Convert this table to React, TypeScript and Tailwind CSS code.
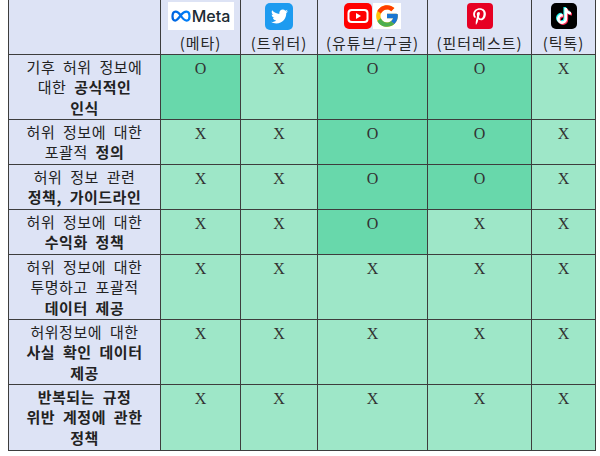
import React from "react";
import { FaTwitter, FaPinterestP, FaTiktok } from "react-icons/fa";
import { FcGoogle } from "react-icons/fc";

type Cell = { v: "O" | "X"; dark: boolean };

const rows: { lines: React.ReactNode[]; h: string; cells: Cell[] }[] = [
  {
    lines: [
      <>기후 허위 정보에</>,
      <>대한 <b className="font-bold">공식적인</b></>,
      <b className="font-bold">인식</b>,
    ],
    h: "h-[65px]",
    cells: [
      { v: "O", dark: true },
      { v: "X", dark: false },
      { v: "O", dark: true },
      { v: "O", dark: true },
      { v: "X", dark: false },
    ],
  },
  {
    lines: [<>허위 정보에 대한</>, <>포괄적 <b className="font-bold">정의</b></>],
    h: "h-[45px]",
    cells: [
      { v: "X", dark: false },
      { v: "X", dark: false },
      { v: "O", dark: true },
      { v: "O", dark: true },
      { v: "X", dark: false },
    ],
  },
  {
    lines: [<>허위 정보 관련</>, <b className="font-bold">정책, 가이드라인</b>],
    h: "h-[45px]",
    cells: [
      { v: "X", dark: false },
      { v: "X", dark: false },
      { v: "O", dark: true },
      { v: "O", dark: true },
      { v: "X", dark: false },
    ],
  },
  {
    lines: [<>허위 정보에 대한</>, <b className="font-bold">수익화 정책</b>],
    h: "h-[45px]",
    cells: [
      { v: "X", dark: false },
      { v: "X", dark: false },
      { v: "O", dark: true },
      { v: "X", dark: false },
      { v: "X", dark: false },
    ],
  },
  {
    lines: [
      <>허위 정보에 대한</>,
      <>투명하고 포괄적</>,
      <b className="font-bold">데이터 제공</b>,
    ],
    h: "h-[65px]",
    cells: [
      { v: "X", dark: false },
      { v: "X", dark: false },
      { v: "X", dark: false },
      { v: "X", dark: false },
      { v: "X", dark: false },
    ],
  },
  {
    lines: [
      <>허위정보에 대한</>,
      <b className="font-bold">사실 확인 데이터</b>,
      <b className="font-bold">제공</b>,
    ],
    h: "h-[65px]",
    cells: [
      { v: "X", dark: false },
      { v: "X", dark: false },
      { v: "X", dark: false },
      { v: "X", dark: false },
      { v: "X", dark: false },
    ],
  },
  {
    lines: [
      <b className="font-bold">반복되는 규정</b>,
      <b className="font-bold">위반 계정에 관한</b>,
      <b className="font-bold">정책</b>,
    ],
    h: "h-[66px]",
    cells: [
      { v: "X", dark: false },
      { v: "X", dark: false },
      { v: "X", dark: false },
      { v: "X", dark: false },
      { v: "X", dark: false },
    ],
  },
];

const kr = { fontFamily: '"Noto Sans CJK KR", "Noto Sans", sans-serif' };

function MetaLogo() {
  return (
    <div className="flex h-[28px] w-[66px] items-center justify-center gap-[1px] bg-white">
      <svg width="20" height="12" viewBox="0 0 40 24">
        <defs>
          <linearGradient id="mg" x1="0" y1="0" x2="1" y2="0">
            <stop offset="0" stopColor="#0064e0" />
            <stop offset="1" stopColor="#0082fb" />
          </linearGradient>
        </defs>
        <path
          d="M20 12 C16 5 12 3 9 3 C5 3 3 8 3 13 C3 18 5 21 8.5 21 C12 21 15 17 20 10 C25 3 28 3 31 3 C35 3 37 8 37 13 C37 18 35 21 31.5 21 C28 21 24 18 20 12 Z"
          fill="none"
          stroke="url(#mg)"
          strokeWidth="4.5"
          strokeLinejoin="round"
        />
      </svg>
      <span
        className="text-[16px] leading-none font-medium text-[#1c2b33]"
        style={{ fontFamily: '"Inter", "Roboto", sans-serif' }}
      >
        Meta
      </span>
    </div>
  );
}

function YouTubeIcon() {
  return (
    <svg width="28" height="26" viewBox="0 0 28 26">
      <rect x="0" y="0" width="28" height="26" rx="5" fill="#ff0000" />
      <rect x="3.5" y="6" width="21" height="14" rx="4" fill="#ffffff" />
      <rect x="5.5" y="8" width="17" height="10" rx="2.5" fill="#ff0000" />
      <path d="M12 10 L17 13 L12 16 Z" fill="#ffffff" />
    </svg>
  );
}

function Header({ icon, label }: { icon: React.ReactNode; label: string }) {
  return (
    <div className="flex h-full flex-col items-center pt-[2px]">
      <div className="flex h-[28px] items-center">{icon}</div>
      <div
        className="mt-[3px] text-[15px] leading-[20px] tracking-[1px] text-[#262626]"
        style={kr}
      >
        {label}
      </div>
    </div>
  );
}

export default function App() {
  const border = "border border-[#3d3d3d]";
  return (
    <div className="bg-white pl-[8px] w-[600px] h-[456px]">
      <table className="table-fixed border-collapse w-[587px]">
        <colgroup>
          <col className="w-[152px]" />
          <col className="w-[80px]" />
          <col className="w-[77px]" />
          <col className="w-[110px]" />
          <col className="w-[104px]" />
          <col className="w-[64px]" />
        </colgroup>
        <thead>
          <tr className="h-[54px]">
            <th className={`${border} border-t-0 bg-[#dde3f5] p-0`}></th>
            <th className={`${border} border-t-0 bg-[#dde3f5] p-0 align-top font-normal`}>
              <Header icon={<MetaLogo />} label="(메타)" />
            </th>
            <th className={`${border} border-t-0 bg-[#dde3f5] p-0 align-top font-normal`}>
              <Header
                icon={
                  <div className="flex h-[27px] w-[28px] items-center justify-center rounded-[5px] bg-[#1d9bf0]">
                    <FaTwitter className="text-white" size={17} />
                  </div>
                }
                label="(트위터)"
              />
            </th>
            <th className={`${border} border-t-0 bg-[#dde3f5] p-0 align-top font-normal`}>
              <Header
                icon={
                  <div className="flex items-center gap-[1px]">
                    <YouTubeIcon />
                    <div className="flex h-[26px] w-[28px] items-center justify-center bg-white">
                      <FcGoogle size={26} />
                    </div>
                  </div>
                }
                label="(유튜브/구글)"
              />
            </th>
            <th className={`${border} border-t-0 bg-[#dde3f5] p-0 align-top font-normal`}>
              <Header
                icon={
                  <div className="flex h-[26px] w-[26px] items-center justify-center rounded-[4px] bg-[#e60023]">
                    <FaPinterestP className="text-white" size={17} />
                  </div>
                }
                label="(핀터레스트)"
              />
            </th>
            <th className={`${border} border-t-0 bg-[#dde3f5] p-0 align-top font-normal`}>
              <Header
                icon={
                  <div className="relative flex h-[26px] w-[26px] items-center justify-center rounded-[5px] bg-black">
                    <FaTiktok className="absolute text-[#25f4ee] translate-x-[-1px] translate-y-[-1px]" size={16} />
                    <FaTiktok className="absolute text-[#fe2c55] translate-x-[1px] translate-y-[1px]" size={16} />
                    <FaTiktok className="absolute text-white" size={16} />
                  </div>
                }
                label="(틱톡)"
              />
            </th>
          </tr>
        </thead>
        <tbody>
          {rows.map((r, i) => (
            <tr key={i} className={r.h}>
              <td
                className={`${border} bg-[#dde3f5] p-0 pt-[2px] align-top text-center text-[15px] leading-[20.5px] text-[#222] tracking-[0.5px] [word-spacing:4px]`}
                style={kr}
              >
                {r.lines.map((l, j) => (
                  <div key={j} className="whitespace-nowrap">{l}</div>
                ))}
              </td>
              {r.cells.map((c, j) => (
                <td
                  key={j}
                  className={`${border} p-0 pt-[3px] align-top text-center text-[16px] leading-[21px] text-[#333] ${
                    c.dark ? "bg-[#68d8ab]" : "bg-[#9ee7c8]"
                  }`}
                  style={{ fontFamily: '"Liberation Serif", "Times New Roman", serif' }}
                >
                  {c.v}
                </td>
              ))}
            </tr>
          ))}
        </tbody>
      </table>
    </div>
  );
}
